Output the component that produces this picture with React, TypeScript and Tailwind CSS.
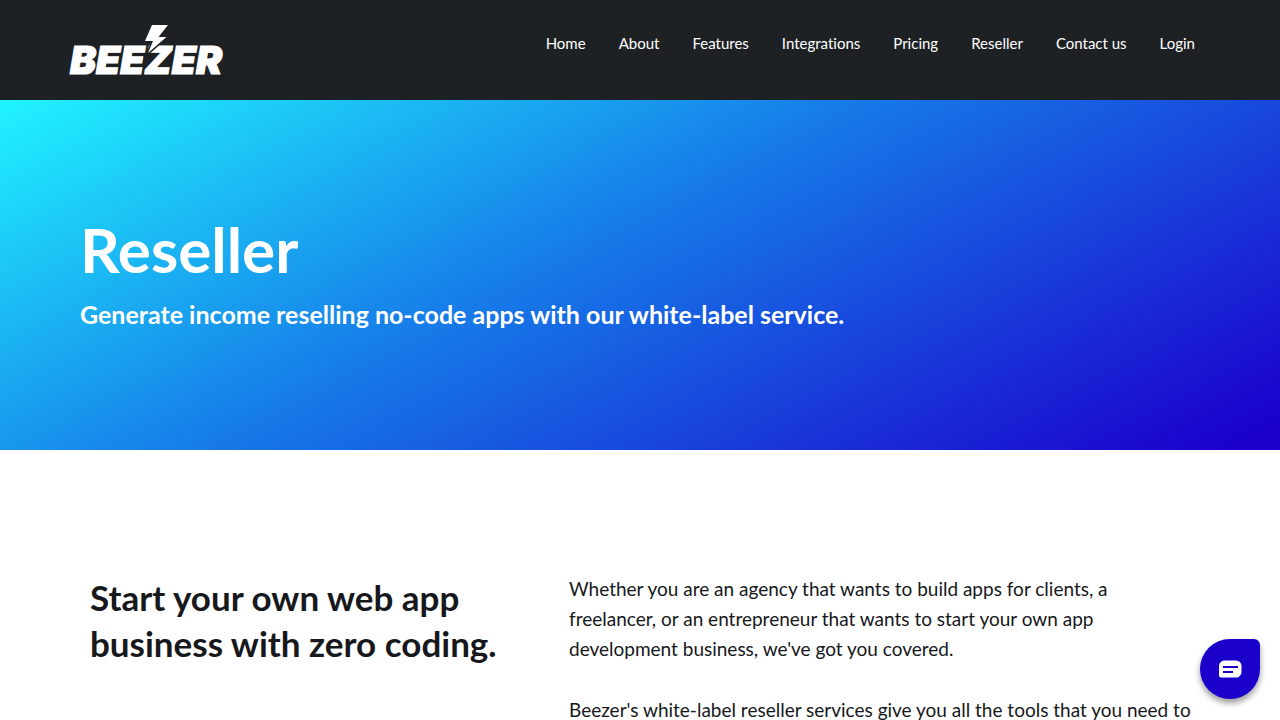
const links = ["Home", "About", "Features", "Integrations", "Pricing", "Reseller", "Contact us", "Login"];

function Logo() {
  return (
    <svg viewBox="0 0 156 52" className="h-[52px] w-[156px] overflow-visible" role="img" aria-label="Beezer">
      <text
        x="0"
        y="50"
        fill="#fff"
        stroke="#fff"
        strokeWidth="1.2"
        fontFamily="Inter, sans-serif"
        fontWeight="900"
        fontStyle="italic"
        fontSize="39"
      >
        BEEZER
      </text>
      <path
        d="M82 1H98L88.500 13H96.500L78 29L83 17H75Z"
        fill="#fff"
        stroke="#1e2124"
        strokeWidth="3"
        paintOrder="stroke"
      />
    </svg>
  );
}

function Header() {
  return (
    <header className="bg-[#1e2124]">
      <div className="mx-auto flex h-[100px] max-w-[1140px] items-start justify-between pt-6">
        <a href="#home" aria-label="Beezer home">
          <Logo />
        </a>
        <nav className="mr-[15px] flex gap-[33px] pt-[7px] text-[15px] leading-6 text-white">
          {links.map((label) => (
            <a key={label} href="#" className="whitespace-nowrap">
              {label}
            </a>
          ))}
        </nav>
      </div>
    </header>
  );
}

function Hero() {
  return (
    <section className="flex h-[350px] items-center bg-[linear-gradient(152deg,#20f4ff_0%,#167be8_44%,#1b00cc_97%)] text-white">
      <div className="mx-auto w-full max-w-[1120px] pb-1.5">
        <h1 className="text-[62px] leading-[62px] font-bold">Reseller</h1>
        <p className="mt-[22px] text-[25px] leading-[25px] font-bold">
          Generate income reselling no-code apps with our white-label service.
        </p>
      </div>
    </section>
  );
}

function Intro() {
  return (
    <section className="mx-auto flex max-w-[1140px] pt-[124px] pb-24 pl-5 text-[#16181b]">
      <h2 className="w-[479px] shrink-0 pr-10 text-[35px] leading-[46px] font-bold">
        Start your own web app business with zero coding.
      </h2>
      <div className="flex-1 space-y-[31px] text-[19px] leading-[30px]">
        <p className="max-w-[560px]">
          Whether you are an agency that wants to build apps for clients, a freelancer, or an entrepreneur that wants
          to start your own app development business, we've got you covered.
        </p>
        <p>Beezer's white-label reseller services give you all the tools that you need to</p>
      </div>
    </section>
  );
}

function ChatButton() {
  return (
    <button
      type="button"
      aria-label="Open chat"
      className="fixed right-5 bottom-[21px] flex size-[60px] items-center justify-center rounded-[30px] rounded-tr-[6px] bg-[#1b00cc] shadow-[0_4px_6px_rgba(0,0,0,0.4)]"
    >
      <svg viewBox="0 0 24 18" className="h-[18px] w-6" aria-hidden="true">
        <path d="M7 0.5H18A5.500 5.500 0 0 1 23.500 6V12A5.500 5.500 0 0 1 18 17.500H3A2 2 0 0 1 1 15.500V6A5.500 5.500 0 0 1 7 0.500Z" fill="#fff" />
        <path d="M5 7H20M5 12H15" stroke="#1b00cc" strokeWidth="2" />
      </svg>
    </button>
  );
}

export default function App() {
  return (
    <div className="h-screen overflow-hidden bg-white font-[Lato,sans-serif] [font-variant-ligatures:none]">
      <Header />
      <main>
        <Hero />
        <Intro />
      </main>
      <ChatButton />
    </div>
  );
}
